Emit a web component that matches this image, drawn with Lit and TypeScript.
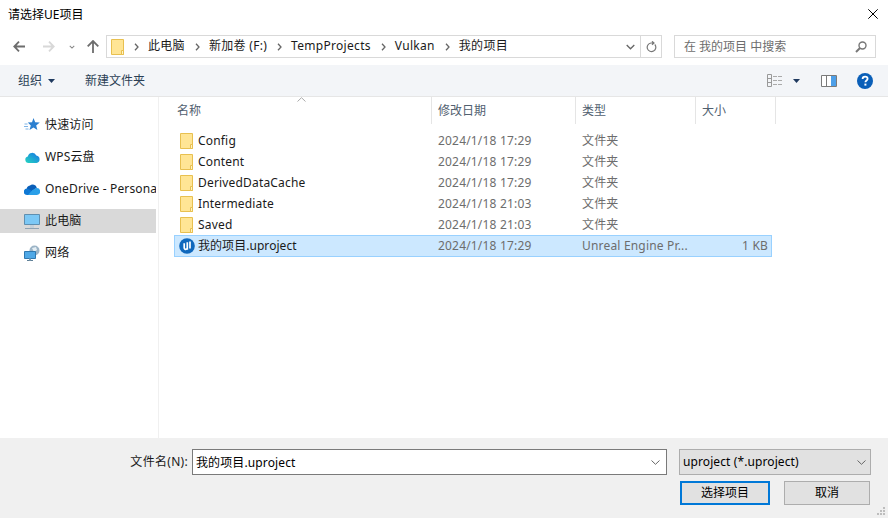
import { LitElement, html, css, svg } from 'lit';
import { customElement } from 'lit/decorators.js';

const folderIcon = html`<svg class="folder" width="13" height="16" viewBox="0 0 13 16">
  <path d="M.5.5h12v15H.5z" fill="#ffe595" stroke="#e8c050"/>
  <path d="M10.5 11.5h2v4h-2z" fill="#fff3c4" stroke="#e8c050"/>
</svg>`;

const ueIcon = html`<svg width="16" height="16" viewBox="0 0 16 16">
  <circle cx="8" cy="8" r="7.8" fill="#0f68bd"/>
  <path d="M5.200 5.200v4.600c0 1.300 1.300 1.900 2.500 1.300M8.300 4.200v7.500M11 3.600v7" fill="none" stroke="#fff" stroke-width="1.700"/>
</svg>`;

const chevron = html`<svg class="crumb-sep" width="5" height="8" viewBox="0 0 5 8"><path d="M1 .8L4 4 1 7.200" fill="none" stroke="#666" stroke-width="1.300"/></svg>`;

const navIcons = {
  back: svg`<path d="M6 .7L1.300 5.500 6 10.300M2 5.500h10" fill="none" stroke="#6d6d6d" stroke-width="1.800"/>`,
  forward: svg`<path d="M6 .7l4.700 4.800L6 10.300M10 5.500H0" fill="none" stroke="#d8d8d8" stroke-width="1.800"/>`,
  up: svg`<path d="M.7 6.300L6 1l5.300 5.300M6 2v11" fill="none" stroke="#6d6d6d" stroke-width="1.800"/>`,
};

const sideIcons = {
  star: html`<svg width="16" height="14" viewBox="0 0 16 14">
    <path d="M9.500 0l1.700 4.300 4.600.3-3.600 2.900 1.200 4.500-3.900-2.500-4 2.500 1.300-4.500-3-2.900 4.200-.3z" fill="#2b7fd0"/>
    <path d="M.5 6h3M0 8.500h4M1.500 11h3" stroke="#7fb4e6" fill="none"/>
  </svg>`,
  wps: html`<svg width="15" height="12" viewBox="0 0 15 12">
    <defs><linearGradient id="wg" x1="0" y1="1" x2="1" y2="0">
      <stop offset="0" stop-color="#25d6c0"/><stop offset="1" stop-color="#1673e6"/>
    </linearGradient></defs>
    <path d="M3.500 12A3.300 3.300 0 0 1 2.800 5.500 4.500 4.500 0 0 1 11.300 4.500 3.800 3.800 0 0 1 11.500 12z" fill="url(#wg)"/>
  </svg>`,
  onedrive: html`<svg width="16" height="11" viewBox="0 0 16 11">
    <path d="M6 1.500A4.300 4.300 0 0 1 12.800 3.800L7 8 2.800 6A4 4 0 0 1 6 1.500z" fill="#0a5eb8"/>
    <path d="M3 4.600A3.100 3.100 0 0 0 3 11h9l-4.500-4.500z" fill="#0f78d4"/>
    <path d="M12.300 4A3.500 3.500 0 0 1 13 11H4l4.500-5z" fill="#2a9fe8"/>
  </svg>`,
  pc: html`<svg width="16" height="15" viewBox="0 0 16 15">
    <path d="M.5.500h15v10H.5z" fill="#7cc8f5" stroke="#5f8fb0"/>
    <path d="M1 14.500h14" stroke="#8fa3b3"/><path d="M6 11h4v3H6z" fill="#c5d0d8"/>
  </svg>`,
  network: html`<svg width="17" height="17" viewBox="0 0 17 17">
    <circle cx="10.500" cy="5.500" r="5" fill="#9cb4c6"/><path d="M8 3l4-1 1 3-3 2z" fill="#e4eef4"/>
    <path d="M.5 6.500h11v7H.5z" fill="#4fa8e6" stroke="#2f78b0"/>
    <path d="M3 15.500h6" stroke="#5f7f96"/><path d="M5 13.500h2v2H5z" fill="#7f9fb4"/>
  </svg>`,
};

const places = [
  { icon: sideIcons.star, label: '快速访问' },
  { icon: sideIcons.wps, label: 'WPS云盘' },
  { icon: sideIcons.onedrive, label: 'OneDrive - Personal' },
  { icon: sideIcons.pc, label: '此电脑', active: true },
  { icon: sideIcons.network, label: '网络' },
];

const files = [
  { name: 'Config', date: '2024/1/18 17:29', type: '文件夹', size: '' },
  { name: 'Content', date: '2024/1/18 17:29', type: '文件夹', size: '' },
  { name: 'DerivedDataCache', date: '2024/1/18 17:29', type: '文件夹', size: '' },
  { name: 'Intermediate', date: '2024/1/18 21:03', type: '文件夹', size: '' },
  { name: 'Saved', date: '2024/1/18 21:03', type: '文件夹', size: '' },
  { name: '我的项目.uproject', date: '2024/1/18 17:29', type: 'Unreal Engine Pr...', size: '1 KB', selected: true },
];

const crumbs = ['此电脑', '新加卷 (F:)', 'TempProjects', 'Vulkan', '我的项目'];

@customElement('app-root')
export class AppRoot extends LitElement {
  static styles = css`
    :host {
      display: flex;
      flex-direction: column;
      width: 888px;
      height: 518px;
      position: relative;
      overflow: hidden;
      background: #fff;
      font: 12px/16px 'Noto Sans', 'Noto Sans CJK SC', sans-serif;
      color: #1a1a1a;
    }
    .titlebar {
      height: 30px;
      flex: none;
      display: flex;
      align-items: center;
      justify-content: space-between;
      padding: 0 10px 0 8px;
      box-sizing: border-box;
      color: #000;
    }
    .titlebar svg { margin-bottom: 2px; }
    .nav {
      height: 35px;
      flex: none;
      display: flex;
      align-items: flex-start;
      padding: 5px 12px 0 13px;
      box-sizing: border-box;
    }
    .nav-buttons {
      display: flex;
      align-items: center;
      width: 93px;
      height: 23px;
      flex: none;
    }
    .nav-buttons .fwd { margin-left: 18px; }
    .nav-buttons .drop { margin-left: 14px; }
    .nav-buttons .up { margin-left: 12px; }
    .address {
      width: 556px;
      height: 23px;
      flex: none;
      box-sizing: border-box;
      border: 1px solid #d9d9d9;
      display: flex;
      align-items: center;
      padding-left: 4px;
    }
    .address .folder { margin-right: 10px; }
    .crumb-sep { flex: none; margin-right: 9px; }
    .crumb {
      margin-right: 10px;
      padding-bottom: 1px;
      letter-spacing: .3px;
      color: #1a1a1a;
      white-space: nowrap;
    }
    .addr-tail {
      margin-left: auto;
      display: flex;
      align-items: center;
      height: 100%;
    }
    .addr-tail .dd { width: 30px; display: flex; justify-content: flex-end; padding-right: 5px; box-sizing: border-box; }
    .addr-tail .refresh {
      width: 20px;
      height: 100%;
      border-left: 1px solid #d9d9d9;
      display: flex;
      align-items: center;
      justify-content: center;
    }
    .search {
      margin-left: 12px;
      width: 202px;
      height: 23px;
      flex: none;
      box-sizing: border-box;
      border: 1px solid #d9d9d9;
      display: flex;
      align-items: center;
      justify-content: space-between;
      padding: 0 8px 0 9px;
      color: #6d6d6d;
    }
    .toolbar {
      height: 32px;
      flex: none;
      box-sizing: border-box;
      background: #f3f5f8;
      border-bottom: 1px solid #e6e6e6;
      display: flex;
      align-items: center;
      padding: 0 15px 0 18px;
      color: #2b3f55;
    }
    .toolbar .caret { margin-left: 6px; }
    .toolbar .new { margin-left: 30px; }
    .toolbar .right { margin-left: auto; display: flex; align-items: center; }
    .toolbar .right .caret { margin-left: 10px; }
    .toolbar .right .pane { margin-left: 21px; }
    .toolbar .right .help { margin-left: 20px; }
    .body {
      flex: 1;
      display: flex;
      min-height: 0;
    }
    .sidebar {
      width: 159px;
      flex: none;
      box-sizing: border-box;
      border-right: 1px solid #f0f0f0;
      padding: 16px 2px 0 0;
      display: flex;
      flex-direction: column;
      gap: 8px;
    }
    .place {
      height: 24px;
      display: flex;
      align-items: center;
      overflow: hidden;
      white-space: nowrap;
      color: #1a1a1a;
      letter-spacing: .15px;
    }
    .place.active { background: #d9d9d9; }
    .place .ico {
      width: 18px;
      margin: 0 4px 0 23px;
      flex: none;
      display: flex;
      justify-content: center;
    }
    .list { flex: 1; position: relative; min-width: 0; }
    .head {
      display: flex;
      height: 27px;
      color: #51606f;
    }
    .head div {
      box-sizing: border-box;
      border-right: 1px solid #e5e5e5;
      padding: 6px 0 0 6px;
    }
    .head .c-name { width: 273px; padding-left: 18px; }
    .head .c-date { width: 144px; }
    .head .c-type { width: 120px; }
    .head .c-size { width: 80px; }
    .sort { position: absolute; left: 138px; top: 0; }
    .rows { padding: 6px 0 0 15px; width: 598px; }
    .row {
      display: flex;
      align-items: center;
      height: 21px;
      box-sizing: border-box;
      color: #6d6d6d;
      white-space: nowrap;
      letter-spacing: .18px;
    }
    .row.selected {
      height: 22px;
      background: #cce8ff;
      box-shadow: inset 0 0 0 1px #99d1ff;
    }
    .row .name {
      width: 258px;
      flex: none;
      display: flex;
      align-items: center;
      gap: 5px;
      padding-left: 6px;
      box-sizing: border-box;
      color: #1a1a1a;
    }
    .row.selected .name { padding-left: 5px; gap: 3px; letter-spacing: .05px; }
    .row .d { width: 144px; flex: none; padding-left: 6px; box-sizing: border-box; }
    .row .t { width: 120px; flex: none; padding-left: 6px; box-sizing: border-box; }
    .row .s { flex: 1; text-align: right; padding-right: 4px; }
    .footer {
      height: 80px;
      flex: none;
      box-sizing: border-box;
      background: #f0f0f0;
      padding: 11px 17px 0 0;
      display: flex;
      flex-direction: column;
      gap: 6px;
      position: relative;
    }
    .field-row { display: flex; align-items: center; justify-content: flex-end; }
    .field-row label { margin-right: 4px; color: #1a1a1a; letter-spacing: .3px; }
    .input {
      width: 475px;
      height: 26px;
      box-sizing: border-box;
      border: 1px solid #7a7a7a;
      background: #fff;
      display: flex;
      align-items: center;
      justify-content: space-between;
      padding: 1px 6px 0 3px;
      color: #000;
      letter-spacing: .12px;
    }
    .type {
      margin-left: 12px;
      width: 192px;
      height: 26px;
      box-sizing: border-box;
      border: 1px solid #adadad;
      background: #e1e1e1;
      display: flex;
      align-items: center;
      justify-content: space-between;
      padding: 0 4px 0 3px;
      color: #000;
      letter-spacing: .1px;
    }
    .btn-row { display: flex; justify-content: flex-end; gap: 14px; padding-right: 1px; }
    button {
      font: inherit;
      color: #000;
      height: 24px;
      padding: 0;
      box-sizing: border-box;
      background: #e1e1e1;
      border: 1px solid #adadad;
      width: 86px;
      margin: 0;
    }
    button.primary {
      width: 90px;
      border: 2px solid #0078d7;
    }
    .grip { position: absolute; right: 2px; bottom: 2px; }
  `;

  render() {
    return html`
      <div class="titlebar">
        <span>请选择UE项目</span>
        <svg width="10" height="10" viewBox="0 0 10 10"><path d="M.3.3l9.400 9.400M9.700.3L.3 9.700" stroke="#000" fill="none"/></svg>
      </div>
      <div class="nav">
        <div class="nav-buttons">
          <svg width="12" height="11" viewBox="0 0 12 11">${navIcons.back}</svg>
          <svg class="fwd" width="12" height="11" viewBox="0 0 12 11">${navIcons.forward}</svg>
          <svg class="drop" width="6" height="4" viewBox="0 0 7 5"><path d="M.7 1l2.800 2.800L6.300 1" fill="none" stroke="#888" stroke-width="1.300"/></svg>
          <svg class="up" width="12" height="13" viewBox="0 0 12 13">${navIcons.up}</svg>
        </div>
        <div class="address">
          ${folderIcon}
          ${crumbs.map((c) => html`${chevron}<span class="crumb">${c}</span>`)}
          <div class="addr-tail">
            <div class="dd"><svg width="9" height="6" viewBox="0 0 9 6"><path d="M.7 1l3.800 3.800L8.300 1" fill="none" stroke="#666" stroke-width="1.300"/></svg></div>
            <div class="refresh"><svg width="11" height="12" viewBox="0 0 11 12"><path d="M8.800 3.500A4.300 4.300 0 1 1 5 2H8M6 .3L8 2 6 3.800" fill="none" stroke="#777" stroke-width="1.200"/></svg></div>
          </div>
        </div>
        <div class="search">
          <span>在 我的项目 中搜索</span>
          <svg width="12" height="12" viewBox="0 0 12 12"><circle cx="7.500" cy="4.500" r="3.500" fill="none" stroke="#777" stroke-width="1.400"/><path d="M5 7l-4 4" stroke="#777" stroke-width="2"/></svg>
        </div>
      </div>
      <div class="toolbar">
        <span>组织</span>
        <svg class="caret" width="7" height="4" viewBox="0 0 7 4"><path d="M0 0h7L3.500 4z" fill="#1f3a5f"/></svg>
        <span class="new">新建文件夹</span>
        <div class="right">
          <svg width="16" height="13" viewBox="0 0 16 13">
            <path d="M.5.500h4v12h-4zM.5 4.500h4M.5 8.500h4" fill="none" stroke="#999"/>
            <path d="M6 2.500h10M6 6.500h10M6 10.500h10" stroke="#aaa" stroke-dasharray="4 1"/>
          </svg>
          <svg class="caret" width="7" height="4" viewBox="0 0 7 4"><path d="M0 0h7L3.500 4z" fill="#1f3a5f"/></svg>
          <svg class="pane" width="16" height="12" viewBox="0 0 16 12">
            <path d="M.5.500h15v11H.5z" fill="#fff" stroke="#7a7a7a"/>
            <path d="M10 1h5v10h-5z" fill="#4d9fe8"/>
            <path d="M5.500 1v10" stroke="#7a7a7a"/>
          </svg>
          <svg class="help" width="16" height="16" viewBox="0 0 16 16">
            <circle cx="8" cy="8" r="8" fill="#0a5fb8"/>
            <path d="M5.600 6c0-1.500 1-2.400 2.500-2.400S10.600 4.500 10.600 5.800c0 1.600-2.200 1.800-2.200 3.500" fill="none" stroke="#fff" stroke-width="1.800"/>
            <path d="M7.400 10.600h2v2h-2z" fill="#fff"/>
          </svg>
        </div>
      </div>
      <div class="body">
        <div class="sidebar">
          ${places.map((p) => html`<div class="place ${p.active ? 'active' : ''}"><span class="ico">${p.icon}</span><span>${p.label}</span></div>`)}
        </div>
        <div class="list">
          <svg class="sort" width="9" height="5" viewBox="0 0 9 5"><path d="M.5 4.500L4.500.7l4 3.800" fill="none" stroke="#aaa"/></svg>
          <div class="head">
            <div class="c-name">名称</div>
            <div class="c-date">修改日期</div>
            <div class="c-type">类型</div>
            <div class="c-size">大小</div>
          </div>
          <div class="rows">
            ${files.map((f) => html`
              <div class="row ${f.selected ? 'selected' : ''}">
                <div class="name">${f.selected ? ueIcon : folderIcon}<span>${f.name}</span></div>
                <div class="d">${f.date}</div>
                <div class="t">${f.type}</div>
                <div class="s">${f.size}</div>
              </div>
            `)}
          </div>
        </div>
      </div>
      <div class="footer">
        <div class="field-row">
          <label>文件名(N):</label>
          <div class="input">
            <span>我的项目.uproject</span>
            <svg width="9" height="5" viewBox="0 0 9 5"><path d="M.5.500l4 3.800 4-3.800" fill="none" stroke="#666"/></svg>
          </div>
          <div class="type">
            <span>uproject (*.uproject)</span>
            <svg width="9" height="5" viewBox="0 0 9 5"><path d="M.5.500l4 3.800 4-3.800" fill="none" stroke="#666"/></svg>
          </div>
        </div>
        <div class="btn-row">
          <button class="primary">选择项目</button>
          <button>取消</button>
        </div>
        <svg class="grip" width="10" height="10" viewBox="0 0 10 10" fill="#bdbdbd">
          <path d="M7 1h2v2H7zM4 4h2v2H4zM7 4h2v2H7zM1 7h2v2H1zM4 7h2v2H4zM7 7h2v2H7z"/>
        </svg>
      </div>
    `;
  }
}
